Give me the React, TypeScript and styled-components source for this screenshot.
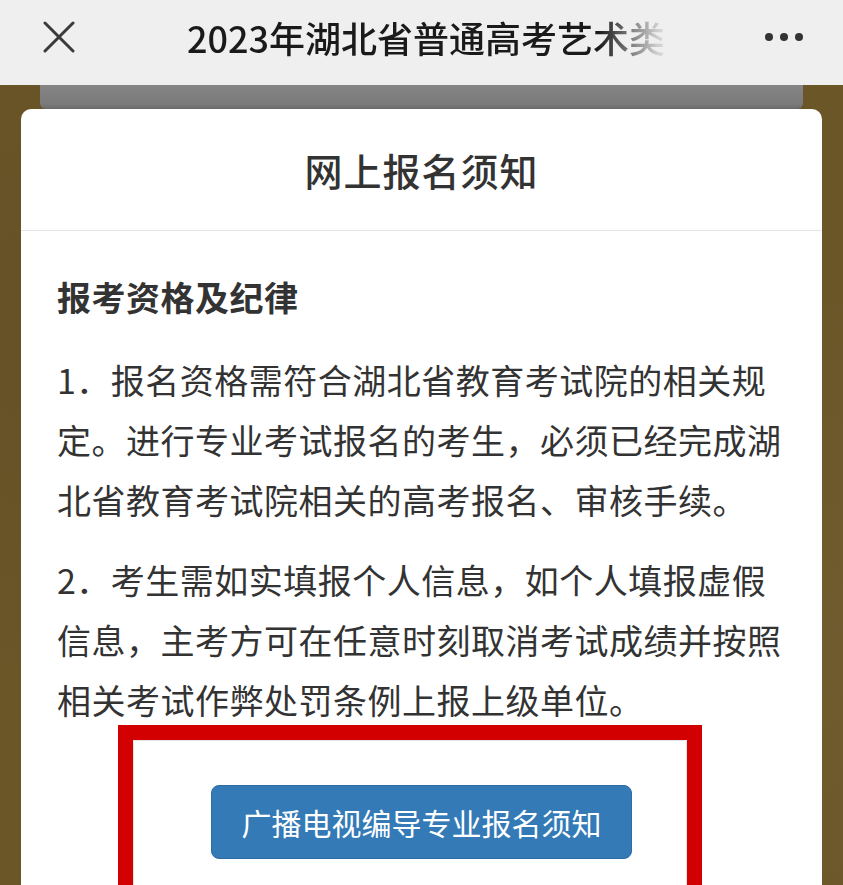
import React from 'react';
import styled, { createGlobalStyle } from 'styled-components';

const GlobalStyle = createGlobalStyle`
    html, body {
        margin: 0;
        padding: 0;
        height: 100%;
        overflow: hidden;
    }
    body {
        font-family: "Noto Sans CJK SC", "Noto Sans", sans-serif;
        background: #6b5628;
    }
`;

const Page = styled.div`
    width: 843px;
    height: 885px;
    display: flex;
    flex-direction: column;
    overflow: hidden;
`;

const TopBar = styled.div`
    height: 74px;
    padding-bottom: 11px;
    flex-shrink: 0;
    background: #efefef;
    display: flex;
    align-items: center;
    padding-left: 43px;
    padding-right: 40px;
`;

const CloseButton = styled.div`
    width: 32px;
    height: 32px;
    display: flex;
`;

const Title = styled.div`
    margin-left: 112px;
    width: 490px;
    font-size: 36px;
    font-weight: 500;
    color: #1a1a1a;
    white-space: nowrap;
    overflow: hidden;
    -webkit-mask-image: linear-gradient(to right, #000 84%, rgba(0, 0, 0, 0.15) 96%, transparent 100%);
    mask-image: linear-gradient(to right, #000 84%, rgba(0, 0, 0, 0.15) 96%, transparent 100%);
`;

const MoreButton = styled.div`
    margin-left: auto;
    display: flex;
    gap: 7px;
    span {
        width: 8px;
        height: 8px;
        border-radius: 50%;
        background: #333;
    }
`;

const Stage = styled.div`
    flex: 1;
    position: relative;
    display: flex;
    flex-direction: column;
    background:
        radial-gradient(circle at 10% 30%, rgba(0, 0, 0, 0.06), transparent 40%),
        radial-gradient(circle at 90% 70%, rgba(255, 255, 255, 0.04), transparent 40%),
        #6b5628;
`;

const BackCard = styled.div`
    height: 24px;
    margin: 0 40px;
    border-radius: 0 0 6px 6px;
    background: linear-gradient(#858585, #7a7a7a 80%, #6a6a6a);
`;

const Modal = styled.div`
    flex: 1;
    margin: 0 21px;
    background: #fff;
    border-radius: 10px 10px 0 0;
    display: flex;
    flex-direction: column;
`;

const ModalHeader = styled.div`
    height: 121px;
    border-bottom: 1px solid #e5e5e5;
    display: flex;
    align-items: center;
    justify-content: center;
    font-size: 38px;
    font-weight: 500;
    color: #333;
    letter-spacing: 1px;
`;

const ModalBody = styled.div`
    padding: 36px 38px 0 36px;
    color: #333;
    font-size: 34px;
    letter-spacing: 0.5px;
    line-height: 60px;
`;

const Heading = styled.div`
    font-weight: 700;
    margin-bottom: 23px;
`;

const Paragraph = styled.p`
    margin: 0 0 20px;
`;

const ActionRow = styled.div`
    display: flex;
    justify-content: center;
    margin-top: 55px;
    margin-right: -2px;
`;

const Button = styled.button`
    width: 421px;
    height: 74px;
    border: 1px solid #2e6da4;
    border-radius: 8px;
    background: #337ab7;
    color: #fff;
    font-family: inherit;
    font-size: 30px;
    letter-spacing: 0;
    padding: 0;
`;

const Highlight = styled.div`
    position: absolute;
    left: 118px;
    top: 640px;
    width: 554px;
    height: 200px;
    border: 15px solid #d20000;
    box-shadow: inset 0 0 0 1px #e6e6e6;
    pointer-events: none;
`;

export default function App() {
    return (
        <Page>
            <GlobalStyle />
            <TopBar>
                <CloseButton>
                    <svg width="32" height="32" viewBox="0 0 32 32">
                        <path d="M2 2 L30 30 M30 2 L2 30" stroke="#3a3a3a" strokeWidth="3" strokeLinecap="round" />
                    </svg>
                </CloseButton>
                <Title>2023年湖北省普通高考艺术类</Title>
                <MoreButton>
                    <span />
                    <span />
                    <span />
                </MoreButton>
            </TopBar>
            <Stage>
                <BackCard />
                <Modal>
                    <ModalHeader>网上报名须知</ModalHeader>
                    <ModalBody>
                        <Heading>报考资格及纪律</Heading>
                        <Paragraph>
                            1．报名资格需符合湖北省教育考试院的相关规定。进行专业考试报名的考生，必须已经完成湖北省教育考试院相关的高考报名、审核手续。
                        </Paragraph>
                        <Paragraph>
                            2．考生需如实填报个人信息，如个人填报虚假信息，主考方可在任意时刻取消考试成绩并按照相关考试作弊处罚条例上报上级单位。
                        </Paragraph>
                        <ActionRow>
                            <Button>广播电视编导专业报名须知</Button>
                        </ActionRow>
                    </ModalBody>
                </Modal>
                <Highlight />
            </Stage>
        </Page>
    );
}
